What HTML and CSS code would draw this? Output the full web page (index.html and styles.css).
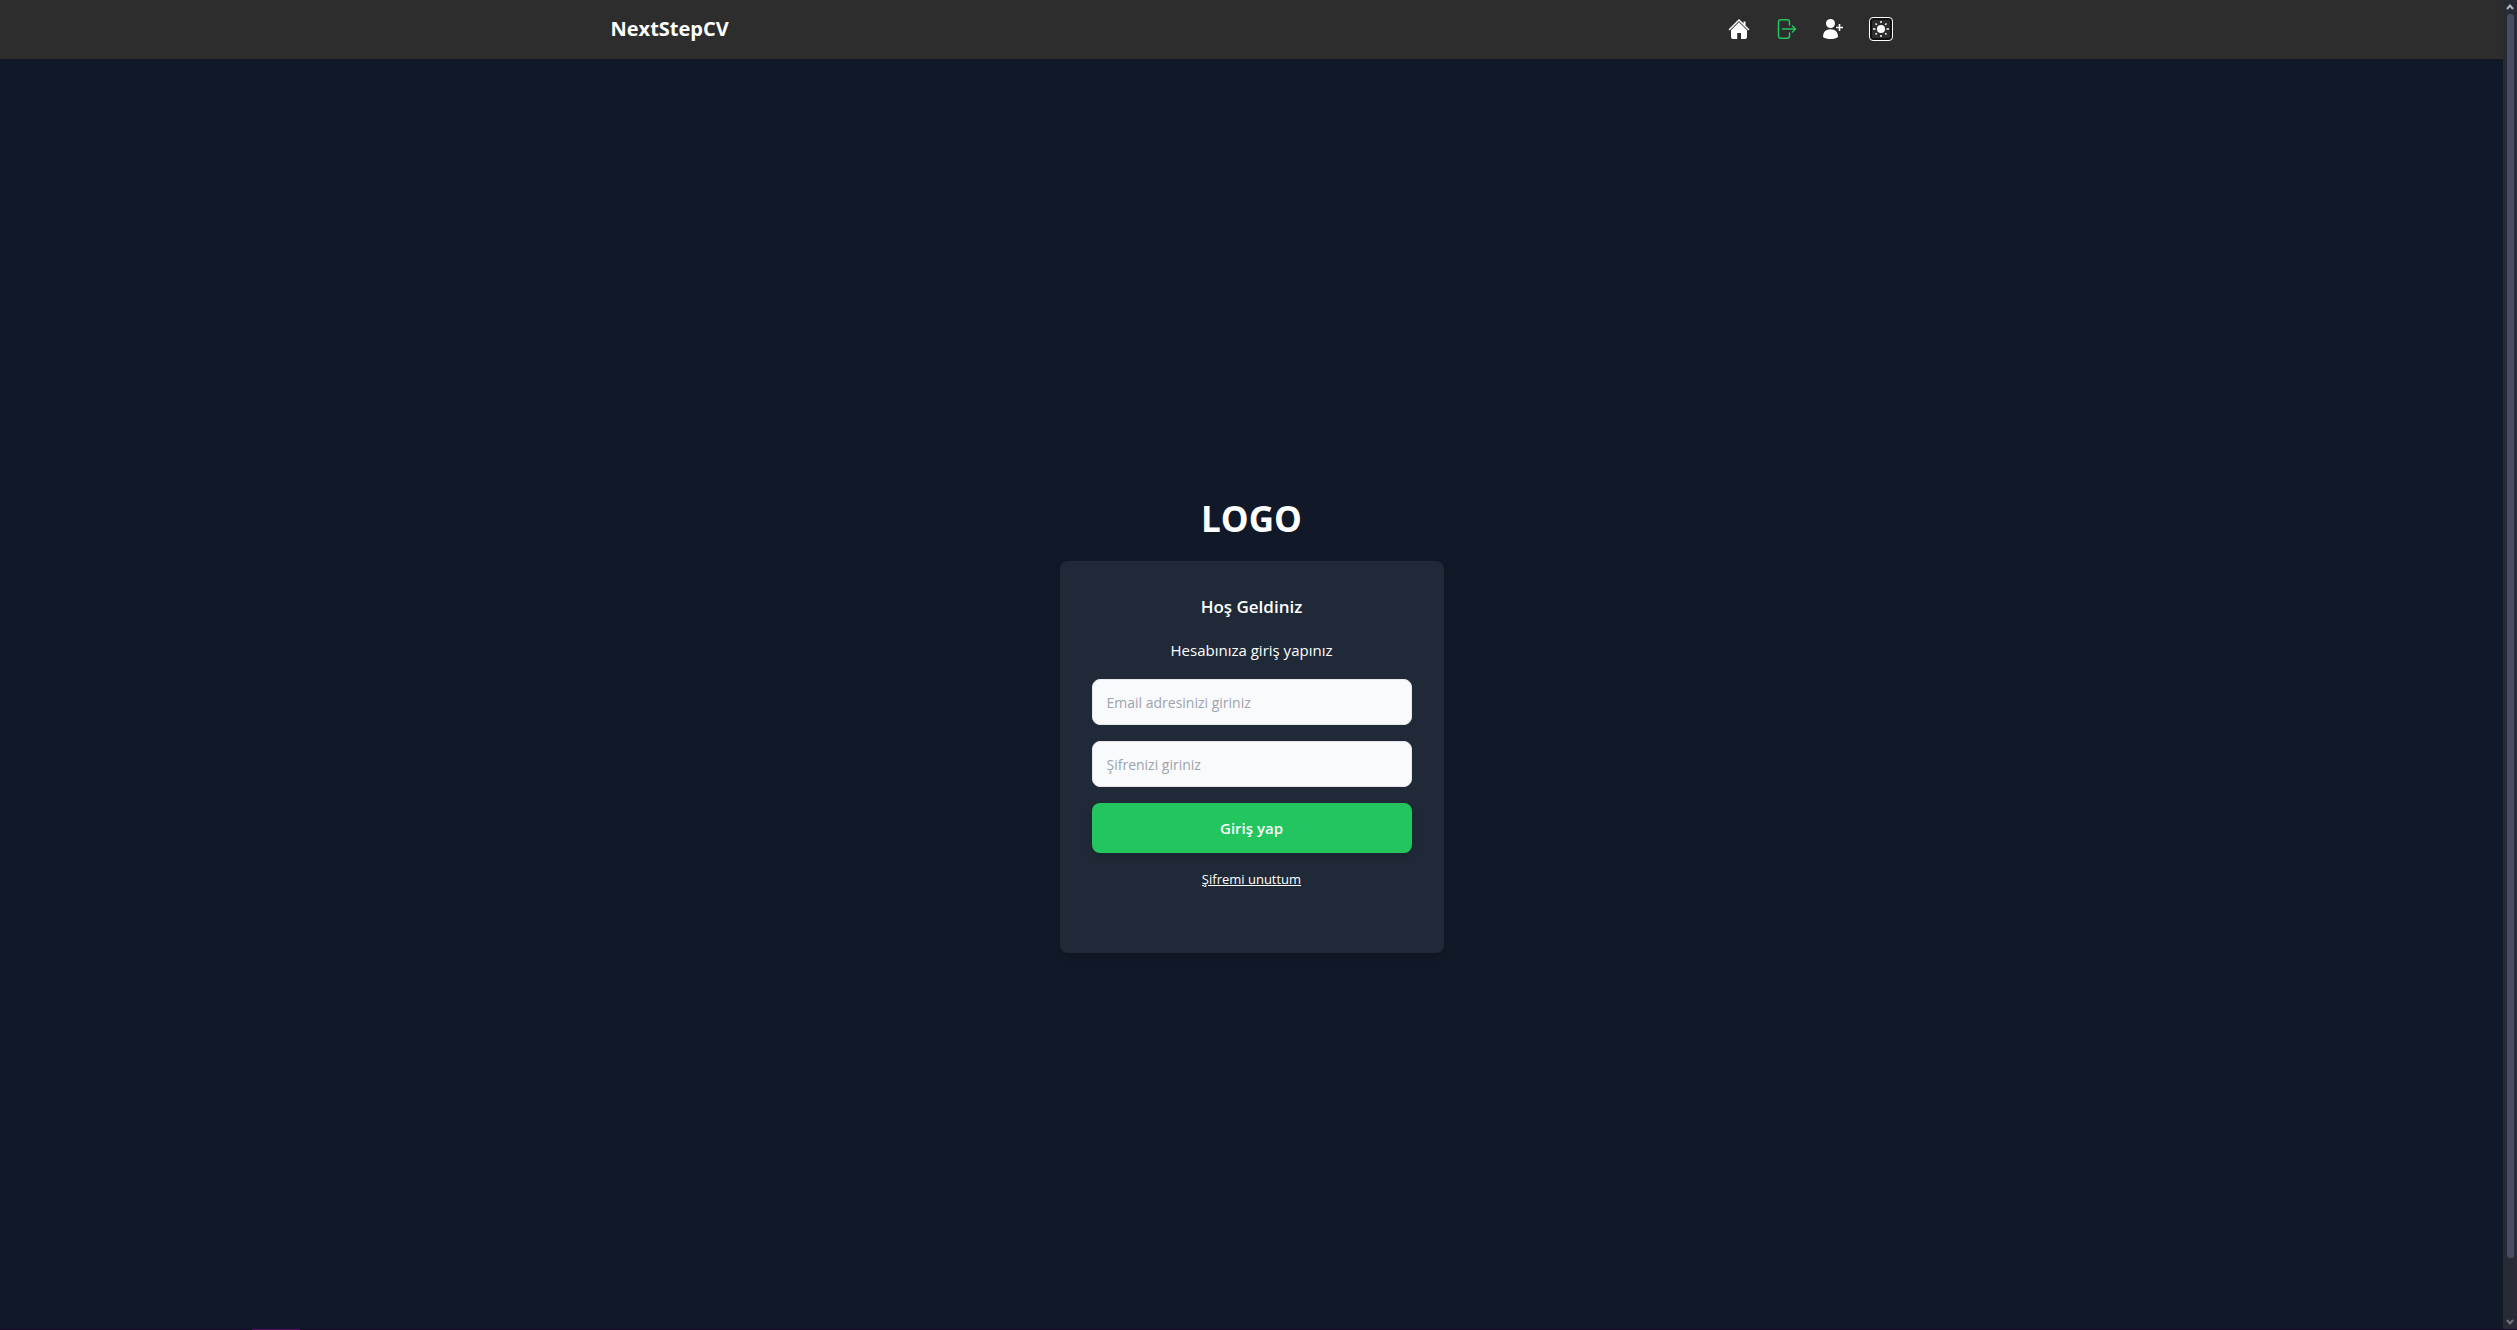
FILE: index.html
```html
<!DOCTYPE html>
<html lang="tr">
<head>
  <meta charset="utf-8">
  <meta name="viewport" content="width=device-width, initial-scale=1">
  <title>NextStepCV</title>
  <link rel="stylesheet" href="styles.css">
</head>
<body>
  <div class="shell">
    <div class="page">
      <header class="navbar">
        <nav class="navbar-inner">
          <a class="brand" href="#">NextStepCV</a>
          <div class="nav-links">
            <a class="nav-icon" href="#" aria-label="Ana sayfa">
              <svg viewBox="0 0 22 22" width="22" height="22" fill="none">
                <path d="M1.500 11.500 11 2l9.500 9.500" stroke="#fff" stroke-width="1.500" stroke-linecap="round"/>
                <path d="M16.500 3.500v4" stroke="#fff" stroke-width="2"/>
                <path d="M11 4.300l8 8V19a2 2 0 0 1-2 2h-4v-6H9.200v6H5a2 2 0 0 1-2-2v-6.700z" fill="#fff"/>
              </svg>
            </a>
            <a class="nav-icon nav-icon-active" href="#" aria-label="Giriş">
              <svg viewBox="-2 0 22 22" width="22" height="22" fill="none" stroke="currentColor" stroke-width="1.500" stroke-linecap="round" stroke-linejoin="round">
                <path d="M12.500 7V4a2.300 2.300 0 0 0-2.300-2.300H3.800A2.300 2.300 0 0 0 1.500 4v14a2.300 2.300 0 0 0 2.300 2.300h6.400a2.300 2.300 0 0 0 2.300-2.300v-3M5.500 11H18.500M15.500 8l3 3-3 3"/>
              </svg>
            </a>
            <a class="nav-icon" href="#" aria-label="Kayıt ol">
              <svg viewBox="0 0 22 22" width="22" height="22" fill="#fff">
                <circle cx="8.500" cy="5.500" r="4.500"/>
                <path d="M1 19c0-5 2.500-7.800 7.500-7.800S16 14 16 19c-2 1.600-4.500 2-7.500 2s-5.500-.4-7.500-2z"/>
                <path d="M17.500 6v7M14 9.500h7" stroke="#fff" stroke-width="1.600"/>
              </svg>
            </a>
            <button class="theme-toggle" type="button" aria-label="Temayı değiştir">
              <svg viewBox="0 0 18 18" width="18" height="18" fill="none">
                <circle cx="9" cy="9" r="4" fill="#fff"/>
                <path d="M9 1v2M9 15v2M1 9h2.500M14.500 9H17M3.500 3.500l1.300 1.300M13.200 13.200l1.300 1.300M3.500 14.500l1.300-1.300M13.200 4.800l1.300-1.300" stroke="#fff" stroke-width="1.500"/>
              </svg>
            </button>
          </div>
        </nav>
      </header>
      <main class="login">
        <h1 class="logo">LOGO</h1>
        <form class="card">
          <h2 class="card-title">Hoş Geldiniz</h2>
          <p class="card-text">Hesabınıza giriş yapınız</p>
          <input class="field" type="email" aria-label="Email" placeholder="Email adresinizi giriniz">
          <input class="field" type="password" aria-label="Şifre" placeholder="Şifrenizi giriniz">
          <button class="submit" type="button">Giriş yap</button>
          <a class="forgot" href="#">Şifremi unuttum</a>
        </form>
      </main>
    </div>
    <div class="scrollbar" aria-hidden="true">
      <svg class="arrow" viewBox="0 0 8 7" width="8" height="7"><path d="M1 6l3-3.500L7 6" fill="none" stroke="#b8b8b8" stroke-width="2"/></svg>
      <div class="track"><div class="thumb"></div></div>
      <svg class="arrow" viewBox="0 0 8 7" width="8" height="7"><path d="M1 1l3 3.500L7 1" fill="none" stroke="#77777a" stroke-width="2"/></svg>
    </div>
    <div class="bottom-edge" aria-hidden="true"><div class="bottom-mark"></div></div>
  </div>
</body>
</html>
```
FILE: styles.css
```css
* {
  box-sizing: border-box;
}

body {
  margin: 0;
  background: #111827;
  color: #fff;
  font-family: "Segoe UI", "Open Sans", "Noto Sans", sans-serif;
  font-size: 15px;
  line-height: 24px;
}

.shell {
  display: grid;
  grid-template-columns: 1fr 14px;
  grid-template-rows: minmax(0, 1fr) 1px;
  height: 100vh;
  overflow: hidden;
}

.page {
  overflow: hidden;
}

.navbar {
  background: #2d2d2d;
}

.navbar-inner {
  display: flex;
  align-items: center;
  justify-content: space-between;
  max-width: 1282px;
  height: 59px;
  margin: 0 auto;
  padding-bottom: 1px;
}

.brand {
  color: #fff;
  font-size: 20px;
  font-weight: 700;
  line-height: 28px;
  text-decoration: none;
}

.nav-links {
  display: flex;
  align-items: center;
  gap: 25px;
}

.nav-icon {
  display: flex;
  color: #fff;
}

.nav-icon-active {
  color: #22c55e;
}

.nav-links svg {
  display: block;
}

.theme-toggle {
  display: flex;
  align-items: center;
  justify-content: center;
  width: 24px;
  height: 24px;
  padding: 0;
  border: 1px solid #fff;
  border-radius: 4px;
  background: #2d2d2d;
  box-shadow: inset 0 0 0 2px #101010;
}

.login {
  display: flex;
  flex-direction: column;
  align-items: center;
  justify-content: center;
  min-height: 100vh;
  padding-top: 4px;
}

.logo {
  margin: 0 0 22px;
  font-size: 35px;
  font-weight: 700;
  line-height: 40px;
}

.card {
  display: flex;
  flex-direction: column;
  gap: 16px;
  width: 384px;
  max-width: 100%;
  padding: 32px 32px 64px;
  border-radius: 8px;
  background: #1f2937;
  box-shadow: 0 4px 6px rgba(0, 0, 0, 0.1);
}

.card-title,
.card-text {
  margin: 0;
  text-align: center;
}

.card-title {
  font-size: 17px;
  font-weight: 600;
  line-height: 28px;
}

.card-text {
  line-height: 26px;
}

.field {
  width: 100%;
  height: 46px;
  padding: 0 14px;
  border: 1px solid #e5e7eb;
  border-radius: 8px;
  background: #f9fafb;
  color: #111827;
  font: inherit;
  font-size: 14px;
}

.field::placeholder {
  color: #9ca3af;
  opacity: 1;
}

.submit {
  height: 50px;
  border: 0;
  border-radius: 8px;
  background: #22c55e;
  box-shadow: 0 4px 6px rgba(0, 0, 0, 0.1);
  color: #fff;
  font: inherit;
  font-weight: 600;
}

.forgot {
  align-self: center;
  color: #fff;
  font-size: 13px;
  line-height: 20px;
}

.scrollbar {
  display: flex;
  flex-direction: column;
  align-items: center;
  gap: 4px;
  padding: 3px 0;
  background: #282a36;
}

.track {
  flex: 1;
  width: 7px;
  padding-bottom: 57px;
}

.thumb {
  height: 100%;
  border-radius: 3px;
  background: #494d64;
}

.bottom-edge {
  grid-column: 1 / -1;
  background: #20052b;
}

.bottom-mark {
  width: 48px;
  height: 1px;
  margin-left: 10%;
  background: #5a0a66;
}
```
